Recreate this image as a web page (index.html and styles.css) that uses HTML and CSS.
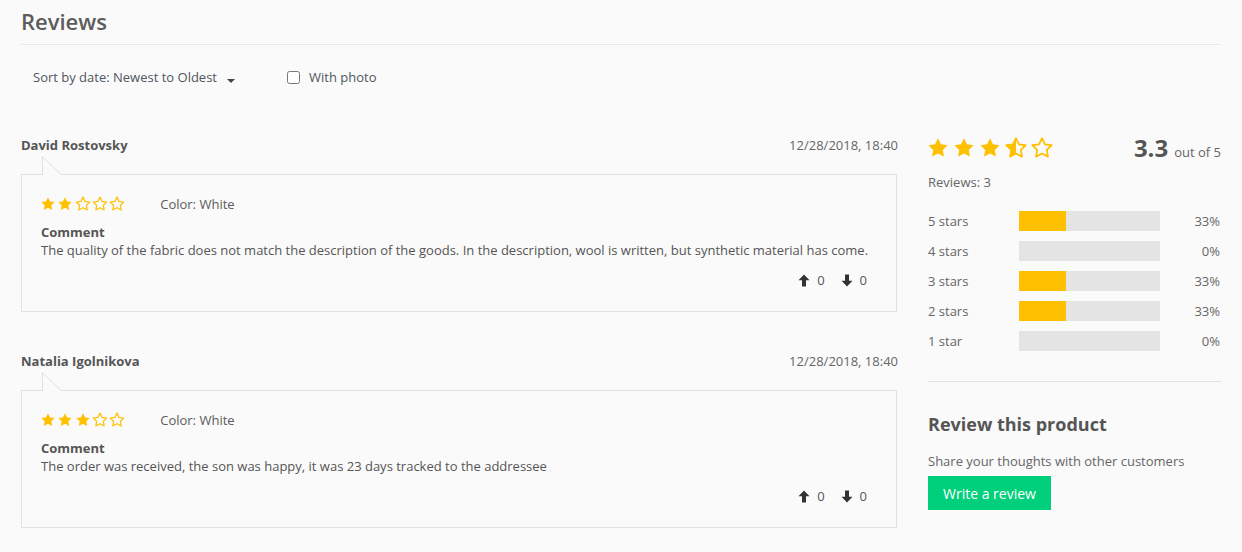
FILE: index.html
```html
<!DOCTYPE html>
<html lang="en">
<head>
<meta charset="utf-8">
<title>Reviews</title>
<link rel="stylesheet" href="styles.css">
</head>
<body>
<svg width="0" height="0" class="defs">
  <defs>
    <path id="star" d="M12 2.2l2.95 6.1 6.65.95-4.8 4.7 1.13 6.65L12 17.45 6.07 20.6 7.2 13.95 2.4 9.25l6.65-.95z"/>
    <clipPath id="half"><rect x="0" y="0" width="12" height="24"/></clipPath>
  </defs>
</svg>
<div class="page">
  <header class="head">
    <h1 class="title">Reviews</h1>
  </header>
  <div class="toolbar">
    <div class="sort">Sort by date: Newest to Oldest <span class="caret"></span></div>
    <label class="photo"><input type="checkbox" class="check"> With photo</label>
  </div>
  <div class="content">
    <div class="list">
      <article class="review">
        <div class="review-head">
          <span class="author">David Rostovsky</span>
          <span class="date">12/28/2018, 18:40</span>
        </div>
        <div class="card">
          <svg class="notch" width="21" height="19" viewBox="0 0 21 19"><polygon points="0.5,19 0.5,0.5 19.5,19" fill="#fafafa"/><polyline points="0.5,19 0.5,0.5 19.5,19" fill="none" stroke="#e1e1e1" stroke-width="1"/></svg>
          <div class="meta">
            <div class="stars-sm">
              <svg viewBox="2 2 20 19" class="s-full"><use href="#star"/></svg>
              <svg viewBox="2 2 20 19" class="s-full"><use href="#star"/></svg>
              <svg viewBox="2 2 20 19" class="s-empty"><use href="#star"/></svg>
              <svg viewBox="2 2 20 19" class="s-empty"><use href="#star"/></svg>
              <svg viewBox="2 2 20 19" class="s-empty"><use href="#star"/></svg>
            </div>
            <span class="color">Color: White</span>
          </div>
          <div class="label">Comment</div>
          <p class="text">The quality of the fabric does not match the description of the goods. In the description, wool is written, but synthetic material has come.</p>
          <div class="votes">
            <span class="vote"><svg viewBox="0 0 12 13" class="arrow"><path d="M6 0.5L11.5 6.2H8V12.5H4V6.2H0.5z"/></svg>0</span>
            <span class="vote"><svg viewBox="0 0 12 13" class="arrow"><path d="M6 12.5L11.5 6.8H8V0.5H4V6.8H0.5z"/></svg>0</span>
          </div>
        </div>
      </article>
      <article class="review">
        <div class="review-head">
          <span class="author">Natalia Igolnikova</span>
          <span class="date">12/28/2018, 18:40</span>
        </div>
        <div class="card">
          <svg class="notch" width="21" height="19" viewBox="0 0 21 19"><polygon points="0.5,19 0.5,0.5 19.5,19" fill="#fafafa"/><polyline points="0.5,19 0.5,0.5 19.5,19" fill="none" stroke="#e1e1e1" stroke-width="1"/></svg>
          <div class="meta">
            <div class="stars-sm">
              <svg viewBox="2 2 20 19" class="s-full"><use href="#star"/></svg>
              <svg viewBox="2 2 20 19" class="s-full"><use href="#star"/></svg>
              <svg viewBox="2 2 20 19" class="s-full"><use href="#star"/></svg>
              <svg viewBox="2 2 20 19" class="s-empty"><use href="#star"/></svg>
              <svg viewBox="2 2 20 19" class="s-empty"><use href="#star"/></svg>
            </div>
            <span class="color">Color: White</span>
          </div>
          <div class="label">Comment</div>
          <p class="text">The order was received, the son was happy, it was 23 days tracked to the addressee</p>
          <div class="votes">
            <span class="vote"><svg viewBox="0 0 12 13" class="arrow"><path d="M6 0.5L11.5 6.2H8V12.5H4V6.2H0.5z"/></svg>0</span>
            <span class="vote"><svg viewBox="0 0 12 13" class="arrow"><path d="M6 12.5L11.5 6.8H8V0.5H4V6.8H0.5z"/></svg>0</span>
          </div>
        </div>
      </article>
    </div>
    <aside class="summary">
      <div class="rating">
        <div class="stars-lg">
          <svg viewBox="2 2 20 19" class="s-full"><use href="#star"/></svg>
          <svg viewBox="2 2 20 19" class="s-full"><use href="#star"/></svg>
          <svg viewBox="2 2 20 19" class="s-full"><use href="#star"/></svg>
          <svg viewBox="2 2 20 19" class="s-half"><use href="#star" class="half-out"/><use href="#star" class="half-in" clip-path="url(#half)"/></svg>
          <svg viewBox="2 2 20 19" class="s-empty"><use href="#star"/></svg>
        </div>
        <div class="score"><span class="big">3.3</span> out of 5</div>
      </div>
      <div class="count">Reviews: 3</div>
      <div class="bars">
        <div class="bar-row"><span class="bar-label">5 stars</span><span class="bar"><span class="fill" style="width:33%"></span></span><span class="pct">33%</span></div>
        <div class="bar-row"><span class="bar-label">4 stars</span><span class="bar"><span class="fill" style="width:0%"></span></span><span class="pct">0%</span></div>
        <div class="bar-row"><span class="bar-label">3 stars</span><span class="bar"><span class="fill" style="width:33%"></span></span><span class="pct">33%</span></div>
        <div class="bar-row"><span class="bar-label">2 stars</span><span class="bar"><span class="fill" style="width:33%"></span></span><span class="pct">33%</span></div>
        <div class="bar-row"><span class="bar-label">1 star</span><span class="bar"><span class="fill" style="width:0%"></span></span><span class="pct">0%</span></div>
      </div>
      <div class="write">
        <h2 class="write-title">Review this product</h2>
        <p class="write-sub">Share your thoughts with other customers</p>
        <button class="btn">Write a review</button>
      </div>
    </aside>
  </div>
</div>
</body>
</html>
```

FILE: styles.css
```css
* { box-sizing: border-box; }
html, body { margin: 0; padding: 0; background: #fafafa; }
body {
  font-family: "Open Sans", "Liberation Sans", sans-serif;
  font-size: 13px;
  color: #5a5a5a;
}
.defs { position: absolute; width: 0; height: 0; overflow: hidden; }
.page { padding: 0 21px; }

.head { height: 45px; border-bottom: 1px solid #e8e8e8; }
.title {
  margin: 0;
  padding-top: 5px;
  font-size: 22px;
  line-height: 32px;
  font-weight: 600;
  color: #5c5c5c;
}

.toolbar {
  display: flex;
  align-items: center;
  height: 28px;
  margin-top: 18px;
  padding-left: 12px;
}
.sort { display: flex; align-items: center; color: #4f5660; }
.caret {
  display: inline-block;
  width: 0; height: 0;
  margin-left: 10px;
  margin-top: 8px;
  border-left: 4.5px solid transparent;
  border-right: 4.5px solid transparent;
  border-top: 4.5px solid #3c4654;
}
.photo { display: flex; align-items: center; margin-left: 52px; color: #4f5660; }
.check { margin: 0 9px 0 0; width: 13px; height: 13px; }

.content {
  display: flex;
  gap: 31px;
  margin-top: 40px;
}
.list { width: 876px; flex: none; }
.review + .review { margin-top: 35px; }
.review-head {
  display: flex;
  justify-content: space-between;
  align-items: center;
  height: 28px;
}
.author { font-weight: 700; color: #555; }
.date { color: #666; margin-right: -1px; }

.card {
  position: relative;
  margin-top: 15px;
  border: 1px solid #e1e1e1;
  padding: 18px 20px 22px 19px;
}
.notch { position: absolute; top: -19px; left: 20px; display: block; }

.meta { display: flex; align-items: center; height: 21px; }
.stars-sm { display: flex; gap: 3.3px; }
.stars-sm svg { width: 14px; height: 13.3px; display: block; overflow: visible; }
.s-full { fill: #ffc000; }
.s-empty { fill: none; stroke: #ffc000; stroke-width: 1.8; stroke-linejoin: round; }
.half-out { fill: none; stroke: #ffc000; stroke-width: 1.8; stroke-linejoin: round; }
.half-in { fill: #ffc000; }
.color { margin-left: 36px; color: #5a5a5a; }

.label { margin-top: 9px; font-weight: 700; line-height: 18px; color: #555; }
.text { margin: 0; line-height: 18px; color: #555; }

.votes {
  display: flex;
  justify-content: flex-end;
  gap: 16px;
  margin-top: 12px;
  padding-right: 9px;
  height: 18px;
  align-items: center;
}
.vote { display: flex; align-items: center; gap: 7px; color: #555; }
.arrow { width: 12px; height: 13px; fill: #333; display: block; }

.summary { width: 293px; flex: none; }
.rating { display: flex; justify-content: space-between; align-items: center; height: 32px; }
.stars-lg { display: flex; gap: 6px; }
.stars-lg svg { width: 20px; height: 19px; display: block; overflow: visible; }
.score { display: flex; align-items: baseline; gap: 6px; color: #666; }
.big { font-size: 24px; font-weight: 700; color: #555; }

.count { margin-top: 10px; line-height: 18px; color: #666; }
.bars { margin-top: 15px; }
.bar-row { display: flex; align-items: center; height: 30px; }
.bar-label { width: 91px; flex: none; color: #666; }
.bar { width: 141px; height: 20px; background: #e4e4e4; display: block; flex: none; }
.fill { display: block; height: 100%; background: #ffc000; }
.pct { flex: 1; text-align: right; padding-right: 1px; color: #666; }

.write { margin-top: 25px; border-top: 1px solid #e1e1e1; padding-top: 29px; }
.write-title { margin: 0; font-size: 18px; line-height: 26px; font-weight: 700; color: #555; }
.write-sub { margin: 15px 0 0; line-height: 18px; color: #666; }
.btn {
  margin-top: 6px;
  height: 34px;
  padding: 0 15px;
  border: 0;
  background: #00cf7b;
  color: #fff;
  font-family: inherit;
  font-size: 14px;
  cursor: pointer;
}
```
